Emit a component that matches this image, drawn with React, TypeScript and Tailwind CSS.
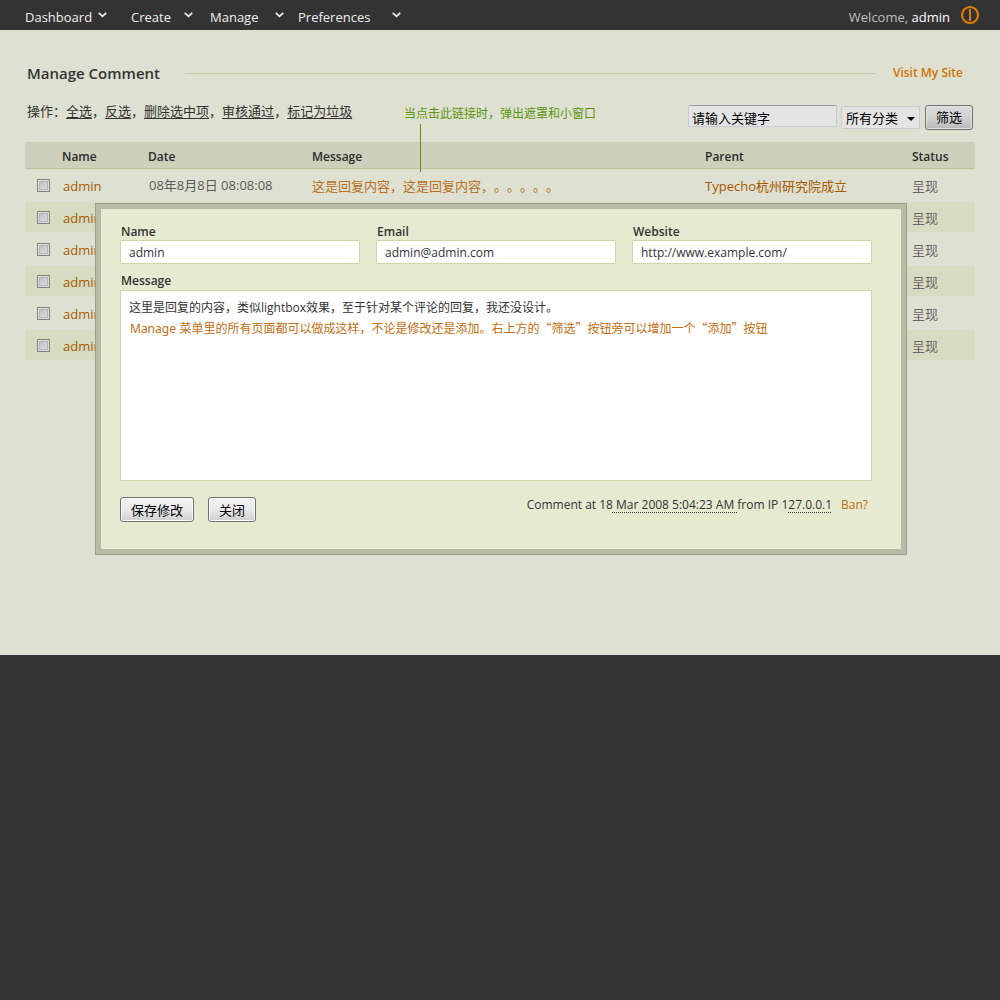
import React from "react";

const menu = [
  { label: "Dashboard", size: "w-[82px] mr-6" },
  { label: "Create", size: "w-[62px] mr-[17px]" },
  { label: "Manage", size: "w-[74px] mr-[14px]" },
  { label: "Preferences", size: "w-[103px]" },
];

const actions = ["全选", "反选", "删除选中项", "审核通过", "标记为垃圾"];

const comments = [
  {
    id: 1,
    date: "08年8月8日 08:08:08",
    message: "这是回复内容，这是回复内容，。。。。。",
    parent: "Typecho杭州研究院成立",
  },
  ...[2, 3, 4, 5, 6].map((id) => ({ id, date: "", message: "", parent: "" })),
];

const buttonStyle =
  "rounded-[3px] border border-[#707070] bg-linear-to-b from-[#f2f2f2] from-0% via-[#ebebeb] via-50% to-[#cfcfcf] to-100% pt-px text-[13px] leading-[15px] text-black shadow-[inset_0_0_0_1px_#fcfcfc]";

function TopBar() {
  return (
    <header className="flex h-[30px] items-center bg-[#333333] pt-1 pr-5 pl-[25px] text-[13px] leading-5 text-[#f0f0f0]">
      <nav className="flex">
        {menu.map((item) => (
          <button key={item.label} type="button" className={`flex justify-between ${item.size}`}>
            <span>{item.label}</span>
            <svg width="9" height="6" viewBox="0 0 9 6" className="mt-[5px]" fill="none" stroke="#eeeeee" strokeWidth="1.8">
              <path d="M0.8 0.8 L4.5 4.3 L8.2 0.8" />
            </svg>
          </button>
        ))}
      </nav>
      <p className="ml-auto text-[#bfbfbf]">
        Welcome, <a href="#profile" className="text-white">admin</a>
      </p>
      <a href="#logout" aria-label="Log out" className="mb-1 ml-[10px]">
        <svg width="20" height="20" viewBox="0 0 20 20" fill="none" stroke="#e07b00">
          <circle cx="10" cy="10" r="8" strokeWidth="2.2" />
          <path d="M10 4V16" strokeWidth="2" />
        </svg>
      </a>
    </header>
  );
}

function Toolbar() {
  return (
    <div className="mt-[18px] flex items-start justify-between pr-[2px] pl-[2px]">
      <p className="text-[13px] leading-5 text-[#333333]">
        操作：
        {actions.map((label, i) => (
          <React.Fragment key={label}>
            {i > 0 && "，"}
            <a href="#action" className="underline underline-offset-2">{label}</a>
          </React.Fragment>
        ))}
      </p>
      <form className="mt-1 flex items-start">
        <input
          aria-label="关键字"
          defaultValue="请输入关键字"
          className="mr-1 h-[22px] w-[149px] rounded-[2px] border border-[#c9cad6] border-t-[#9a9ba3] bg-[#e4e4e4] px-[3px] pt-[2px] text-[13px] leading-4 text-black"
        />
        <div className="relative mt-px mr-[5px]">
          <select
            aria-label="分类"
            className="block h-[23px] w-[79px] appearance-none rounded-[2px] border border-[#c9cad6] bg-[#e4e4e4] pl-1 text-[13px] leading-4 text-black"
          >
            <option>所有分类</option>
          </select>
          <svg width="8" height="4" viewBox="0 0 8 4" className="pointer-events-none absolute top-[11px] right-[5px]">
            <path d="M0 0H8L4 4Z" fill="#000000" />
          </svg>
        </div>
        <button
          type="button"
          className="h-[25px] w-12 rounded-[3px] border border-[#707070] bg-linear-to-b from-[#dadada] via-[#d2d2d2] to-[#b8b8b8] text-[13px] leading-[15px] text-black shadow-[inset_0_0_0_1px_#e2e2e2]"
        >
          筛选
        </button>
      </form>
    </div>
  );
}

function CommentTable() {
  return (
    <table className="mt-3 w-full table-fixed border-collapse text-left text-[13px] leading-4 whitespace-nowrap">
      <colgroup>
        <col className="w-[37px]" />
        <col className="w-[86px]" />
        <col className="w-[164px]" />
        <col />
        <col className="w-[207px]" />
        <col className="w-[63px]" />
      </colgroup>
      <thead>
        <tr className="h-[26px] border-b border-[#bdc49b] bg-[#cdd0bb] text-[12px] text-[#2b2b2b]">
          <th aria-label="Select" />
          <th className="pt-1 font-semibold">Name</th>
          <th className="pt-1 font-semibold">Date</th>
          <th className="pt-1 font-semibold">Message</th>
          <th className="pt-1 font-semibold">Parent</th>
          <th className="pt-1 font-semibold">Status</th>
        </tr>
      </thead>
      <tbody>
        {comments.map((c) => (
          <tr key={c.id} className="h-[34px] even:h-[30px] even:bg-[#d7dbc1]">
            <td className="pl-3">
              <input
                type="checkbox"
                aria-label={`Select comment ${c.id}`}
                className="block h-[13px] w-[13px] appearance-none border border-[#83847f] bg-linear-to-br from-[#b9bcc2] to-[#e4e4e4] shadow-[inset_0_0_0_1px_#dcdcdc,inset_0_0_0_2px_#b4b7ba]"
              />
            </td>
            <td className="pt-[2px] pl-px"><a href="#author" className="text-[#a85a00]">admin</a></td>
            <td className="pl-px text-[#5a5a58]">{c.date}</td>
            <td className="pt-[2px]"><a href="#comment" className="text-[#b87022]">{c.message}</a></td>
            <td className="pt-[2px]"><a href="#post" className="text-[#a85a00]">{c.parent}</a></td>
            <td className="pt-[2px] text-[#666664]">呈现</td>
          </tr>
        ))}
      </tbody>
    </table>
  );
}

function Field({ label, id, value }: { label: string; id: string; value: string }) {
  return (
    <div className="flex-1">
      <label htmlFor={id} className="block pl-px font-semibold">{label}</label>
      <input id={id} defaultValue={value} className="block h-6 w-full border border-[#cfd6a8] bg-white px-2 pt-px leading-4" />
    </div>
  );
}

function CommentDialog() {
  return (
    <div
      role="dialog"
      aria-label="Edit comment"
      className="absolute top-[203px] right-[93px] left-[95px] border border-[#9b9e8a] bg-[#b8bba6] p-[5px]"
    >
      <form className="bg-[#e6ead1] pt-[15px] pr-[29px] pb-[27px] pl-[19px] text-[12px] leading-4 text-[#333333]">
        <div className="flex gap-4">
          <Field label="Name" id="name" value="admin" />
          <Field label="Email" id="email" value="admin@admin.com" />
          <Field label="Website" id="website" value="http://www.example.com/" />
        </div>
        <label htmlFor="message" className="mt-[9px] block pb-px pl-px font-semibold">Message</label>
        <div className="relative">
          <textarea
            id="message"
            defaultValue="这里是回复的内容，类似lightbox效果，至于针对某个评论的回复，我还没设计。"
            className="block h-[191px] w-full resize-none border border-[#cfd6a8] bg-white px-2 py-[9px] leading-4"
          />
          <p className="pointer-events-none absolute top-[30px] left-[10px] text-[#c06e10] font-['Noto_Sans_CJK_SC',sans-serif]">
            <span className="mr-px font-['Noto_Sans',sans-serif]">Manage</span> 菜单里的所有页面都可以做成这样，不论是修改还是添加。右上方的“筛选”按钮旁可以增加一个“添加”按钮
          </p>
        </div>
        <div className="mt-4 flex items-start">
          <button type="button" className={`h-[25px] w-[74px] ${buttonStyle}`}>保存修改</button>
          <button type="button" className={`ml-[14px] h-[25px] w-12 ${buttonStyle}`}>关闭</button>
          <p className="ml-auto pr-1">
            Comment at 18
            <span className="underline decoration-dotted decoration-1 underline-offset-[3px]"> Mar 2008 5:04:23 AM </span>
            from IP 1<span className="underline decoration-dotted decoration-1 underline-offset-[3px]">27.0.0.1</span>
            <a href="#ban" className="ml-[9px] text-[#c06e10]">Ban?</a>
          </p>
        </div>
      </form>
    </div>
  );
}

export default function App() {
  return (
    <div lang="zh-CN" className="min-h-screen bg-[#333333] font-['Open_Sans','Noto_Sans_CJK_SC',sans-serif] [text-spacing-trim:space-all]">
      <TopBar />
      <main className="min-h-[625px] bg-[#dee0d2] px-[25px] pt-[33px]">
        <div className="flex items-center pr-3 pl-[2px] leading-5">
          <h1 className="text-[15px] font-semibold text-[#333333]">Manage Comment</h1>
          <hr className="mr-[18px] ml-[25px] flex-1 border-[#c6cba6]" />
          <a href="#site" className="text-[12px] font-semibold text-[#cf7500]">Visit My Site</a>
        </div>
        <Toolbar />
        <CommentTable />
      </main>
      <div className="pointer-events-none absolute top-[106px] left-[404px] text-[12px] leading-4 text-[#5c940a]">
        <p>当点击此链接时，弹出遮罩和小窗口</p>
        <div className="mt-[2px] ml-4 h-12 w-px bg-[#5c940a]" />
      </div>
      <CommentDialog />
    </div>
  );
}
